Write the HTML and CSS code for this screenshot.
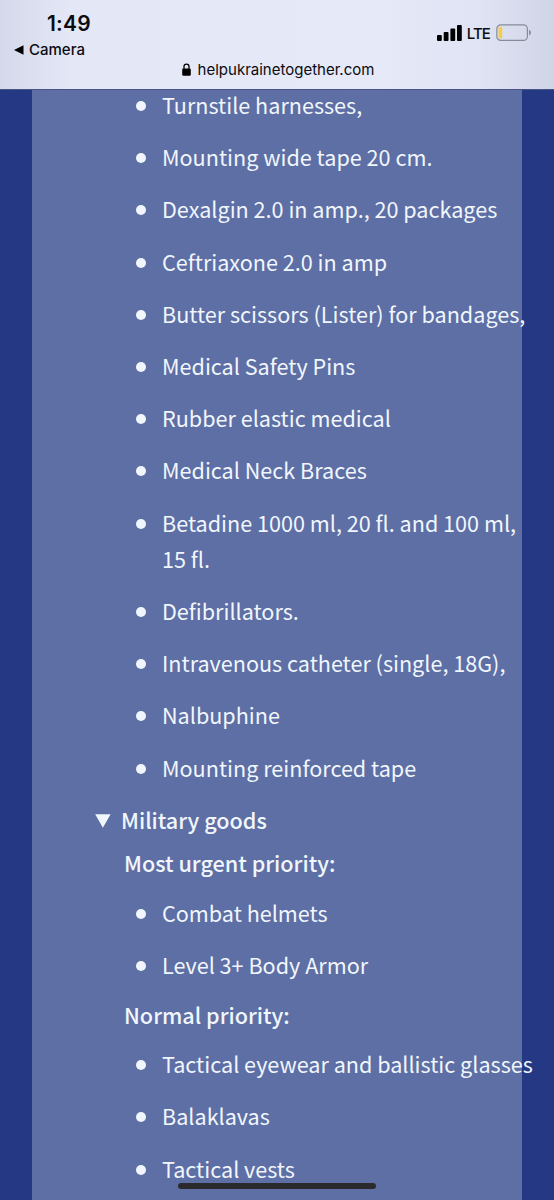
FILE: index.html
```
<!DOCTYPE html>
<html lang="en">
<head>
    <meta charset="UTF-8">
    <meta name="viewport" content="width=device-width, initial-scale=1.0">
    <title>Help Ukraine Together</title>
    <link rel="stylesheet" href="styles.css">
</head>
<body>

<header class="browser-bar">
    <div class="status">
        <div class="status-left">
            <div class="time">1:49</div>
            <div class="back">
                <svg width="10" height="10" viewBox="0 0 10 10"><path d="M0 5L9.5 0.2V9.8Z"/></svg>
                <span>Camera</span>
            </div>
        </div>
        <div class="status-right">
            <svg width="25" height="16" viewBox="0 0 25 16">
                <rect x="0" y="10" width="4.8" height="6" rx="1"/>
                <rect x="6.7" y="7" width="4.8" height="9" rx="1"/>
                <rect x="13.4" y="3.6" width="4.8" height="12.4" rx="1"/>
                <rect x="20" y="0" width="4.8" height="16" rx="1"/>
            </svg>
            <span class="network">LTE</span>
            <svg width="36" height="18" viewBox="0 0 36 18">
                <rect x="0.8" y="0.8" width="30.6" height="15.6" rx="4" fill="none" stroke="#888a99" stroke-width="1.2"/>
                <rect x="2.6" y="2.8" width="3.6" height="11.6" rx="1.5" fill="#f7cc46"/>
                <path d="M33 5.8C35.6 6.8 35.6 10.4 33 11.4Z" fill="#888a99"/>
            </svg>
        </div>
    </div>
    <div class="address">
        <svg width="9" height="13" viewBox="0 0 9 13">
            <path d="M2 6V3.6C2 0.2 7 0.2 7 3.6V6" fill="none" stroke="#000" stroke-width="1.3"/>
            <rect x="0.2" y="5.6" width="8.6" height="7.2" rx="1.2"/>
        </svg>
        <span>helpukrainetogether.com</span>
    </div>
</header>

<main class="panel">
    <ul class="goods">
        <li>Turnstile harnesses,</li>
        <li>Mounting wide tape 20 cm.</li>
        <li>Dexalgin 2.0 in amp., 20 packages</li>
        <li>Ceftriaxone 2.0 in amp</li>
        <li>Butter scissors (Lister) for bandages,</li>
        <li>Medical Safety Pins</li>
        <li>Rubber elastic medical</li>
        <li>Medical Neck Braces</li>
        <li>Betadine 1000 ml, 20 fl. and 100 ml,<br>15 fl.</li>
        <li>Defibrillators.</li>
        <li>Intravenous catheter (single, 18G),</li>
        <li>Nalbuphine</li>
        <li>Mounting reinforced tape</li>
    </ul>

    <h2 class="category">
        <svg width="16" height="14" viewBox="0 0 16 14"><path d="M0.2 0.3H15.6L7.9 13.8Z"/></svg>
        <span>Military goods</span>
    </h2>

    <h3 class="priority">Most urgent priority:</h3>
    <ul class="goods">
        <li>Combat helmets</li>
        <li>Level 3+ Body Armor</li>
    </ul>

    <h3 class="priority">Normal priority:</h3>
    <ul class="goods">
        <li>Tactical eyewear and ballistic glasses</li>
        <li>Balaklavas</li>
        <li>Tactical vests</li>
    </ul>
</main>

<div class="home-indicator"></div>

</body>
</html>
```

FILE: styles.css
```
* {
    box-sizing: border-box;
}

body {
    margin: 0;
    height: 1200px;
    overflow: hidden;
    background-color: #253883;
    color: #f1f6fd;
    font-family: "Noto Sans CJK SC", "Open Sans", sans-serif;
}

.browser-bar {
    height: 90px;
    background: linear-gradient(90deg, #d5d8ea 0, #e3e7f6 70px, #e5e9f8 380px, #dfe3f3 480px, #d0d4e7 554px);
    border-bottom: 1px solid #4a5486;
    color: #0b0b10;
    font-family: Inter, sans-serif;
}

.status {
    display: flex;
    justify-content: space-between;
    height: 60px;
    padding: 12px 22px 0 14px;
}

.time {
    padding-left: 33px;
    font-size: 21px;
    font-weight: 600;
    line-height: 24px;
    letter-spacing: 0.2px;
}

.back {
    display: flex;
    align-items: center;
    gap: 5px;
    margin-top: 4px;
    font-size: 15px;
    font-weight: 500;
    line-height: 20px;
}

.status-right {
    display: flex;
    align-items: center;
    height: 18px;
    margin-top: 12px;
}

.network {
    margin: 0 6px 0 5px;
    font-size: 15px;
    font-weight: 500;
    letter-spacing: -0.9px;
}

.address {
    display: flex;
    align-items: center;
    justify-content: center;
    gap: 7px;
    height: 18px;
    padding-left: 2px;
    font-size: 15px;
}

.panel {
    display: flow-root;
    width: 490px;
    height: 1110px;
    margin-left: 32px;
    background-color: #5d6fa4;
    font-size: 21.6px;
    line-height: 36.2px;
    white-space: nowrap;
}

.goods {
    margin: 0;
    padding: 0 0 0 130px;
    list-style: none;
}

.goods:first-child {
    margin-top: -3px;
}

.goods li {
    position: relative;
    padding-bottom: 16px;
}

.goods li::before {
    content: "";
    position: absolute;
    left: -26px;
    top: 14px;
    width: 10px;
    height: 10px;
    border-radius: 50%;
    background-color: #f1f6fd;
}

.category {
    display: flex;
    align-items: center;
    gap: 10px;
    height: 43px;
    margin: 0;
    padding-left: 63px;
    font-size: 21.6px;
    font-weight: 500;
}

.category span {
    margin-top: -6px;
}

.category svg {
    margin-top: -5px;
    fill: #f1f6fd;
}

.priority {
    height: 50px;
    margin: 0;
    padding-left: 92px;
    font-size: 21.6px;
    font-weight: 500;
}

.goods + .priority {
    height: 49.5px;
    margin-top: -2.5px;
}

.home-indicator {
    position: absolute;
    left: 178px;
    top: 1183px;
    width: 198px;
    height: 6px;
    border-radius: 3px;
    background-color: #2b2b2d;
}
```
